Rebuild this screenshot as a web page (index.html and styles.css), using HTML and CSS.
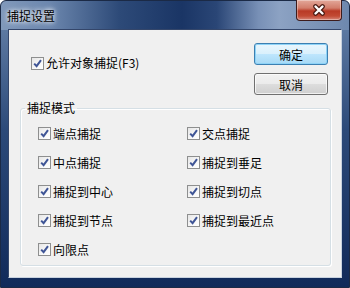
FILE: index.html
```html
<html>
<head>
  <link rel="stylesheet" href="styles.css">
</head>
<body>
  <div class="window">
    <div class="titlebar">
      <span class="title">捕捉设置</span>
      <button class="close">
        <svg width="14" height="12" viewBox="0 0 14 12">
          <path d="M3.5 2.5 L10.5 9.5 M10.5 2.5 L3.5 9.5" stroke="#4a1a12" stroke-width="4.6" stroke-linecap="round"/>
          <path d="M3.5 2.5 L10.5 9.5 M10.5 2.5 L3.5 9.5" stroke="#ffffff" stroke-width="2.4" stroke-linecap="round"/>
        </svg>
      </button>
    </div>

    <div class="client">
      <div class="top">
        <label class="check main"><span class="box"><svg width="11" height="11" viewBox="0 0 11 11"><path d="M2.2 5.6 L4.6 8.2 L9 2.2" fill="none" stroke="#3f5596" stroke-width="2"/></svg></span>允许对象捕捉(F3)</label>
        <div class="buttons">
          <button class="btn default">确定</button>
          <button class="btn">取消</button>
        </div>
      </div>

      <fieldset class="group">
        <legend>捕捉模式</legend>
        <div class="grid">
          <label class="check"><span class="box"><svg width="11" height="11" viewBox="0 0 11 11"><path d="M2.2 5.6 L4.6 8.2 L9 2.2" fill="none" stroke="#3f5596" stroke-width="2"/></svg></span>端点捕捉</label>
          <label class="check"><span class="box"><svg width="11" height="11" viewBox="0 0 11 11"><path d="M2.2 5.6 L4.6 8.2 L9 2.2" fill="none" stroke="#3f5596" stroke-width="2"/></svg></span>交点捕捉</label>
          <label class="check"><span class="box"><svg width="11" height="11" viewBox="0 0 11 11"><path d="M2.2 5.6 L4.6 8.2 L9 2.2" fill="none" stroke="#3f5596" stroke-width="2"/></svg></span>中点捕捉</label>
          <label class="check"><span class="box"><svg width="11" height="11" viewBox="0 0 11 11"><path d="M2.2 5.6 L4.6 8.2 L9 2.2" fill="none" stroke="#3f5596" stroke-width="2"/></svg></span>捕捉到垂足</label>
          <label class="check"><span class="box"><svg width="11" height="11" viewBox="0 0 11 11"><path d="M2.2 5.6 L4.6 8.2 L9 2.2" fill="none" stroke="#3f5596" stroke-width="2"/></svg></span>捕捉到中心</label>
          <label class="check"><span class="box"><svg width="11" height="11" viewBox="0 0 11 11"><path d="M2.2 5.6 L4.6 8.2 L9 2.2" fill="none" stroke="#3f5596" stroke-width="2"/></svg></span>捕捉到切点</label>
          <label class="check"><span class="box"><svg width="11" height="11" viewBox="0 0 11 11"><path d="M2.2 5.6 L4.6 8.2 L9 2.2" fill="none" stroke="#3f5596" stroke-width="2"/></svg></span>捕捉到节点</label>
          <label class="check"><span class="box"><svg width="11" height="11" viewBox="0 0 11 11"><path d="M2.2 5.6 L4.6 8.2 L9 2.2" fill="none" stroke="#3f5596" stroke-width="2"/></svg></span>捕捉到最近点</label>
          <label class="check"><span class="box"><svg width="11" height="11" viewBox="0 0 11 11"><path d="M2.2 5.6 L4.6 8.2 L9 2.2" fill="none" stroke="#3f5596" stroke-width="2"/></svg></span>向限点</label>
        </div>
      </fieldset>
    </div>
  </div>
</body>
</html>
```

FILE: styles.css
```css
body {
  margin: 0;
  font-family: "Noto Sans CJK SC", "Noto Sans", sans-serif;
  font-size: 12px;
  color: #000;
}

.window {
  box-sizing: border-box;
  width: 350px;
  height: 288px;
  display: flex;
  flex-direction: column;
  padding: 0 7px 9px 7px;
  border: 1px solid #1b2a46;
  border-radius: 6px 6px 0 0;
  background:
    linear-gradient(to right, #8199bb 0%, #6c87ae 14%, #2d4a78 34%, #1a3565 52%, #2a4676 62%, #7890b6 74%, #8ca2c3 80%, #6e88ae 100%) top / 100% 29px no-repeat,
    linear-gradient(to bottom, #6a86ad 0%, #2c4a79 45%, #112a5a 100%);
}

.titlebar {
  height: 28px;
  display: flex;
  align-items: flex-start;
}

.title {
  align-self: center;
  margin-left: -1px;
  margin-top: 1px;
  text-shadow: 0 0 4px #fff, 0 0 6px rgba(255, 255, 255, 0.8);
}

.close {
  margin-left: auto;
  margin-top: -1px;
  width: 46px;
  height: 21px;
  padding: 0;
  display: flex;
  align-items: center;
  justify-content: center;
  border: 1px solid #3d1c1c;
  border-top: none;
  border-radius: 0 0 4px 4px;
  background: linear-gradient(to bottom, #e3a89a 0%, #d27d6b 40%, #b93a26 55%, #c24a34 80%, #d8887a 100%);
  box-shadow: inset 0 0 0 1px rgba(255, 255, 255, 0.35);
}

.client {
  flex: 1;
  display: flex;
  flex-direction: column;
  padding: 13px 10px 0 11px;
  background: #f0f0f0;
  border: 1px solid;
  border-color: #34466a #c8d2df #c8d2df #34466a;
}

.top {
  display: flex;
  justify-content: space-between;
}

.check {
  display: flex;
  align-items: center;
  gap: 2px;
  line-height: 16px;
  white-space: nowrap;
}

.check.main {
  align-self: flex-start;
  margin: 12px 0 0 11px;
}

.box {
  box-sizing: border-box;
  width: 13px;
  height: 13px;
  display: flex;
  border: 1px solid #8e8f8f;
  background: linear-gradient(135deg, #e6e6e6 0%, #f8f8f8 60%, #ffffff 100%);
}

.buttons {
  display: flex;
  flex-direction: column;
  gap: 8px;
  margin-right: 3px;
}

.btn {
  width: 74px;
  height: 22px;
  padding: 0;
  font-family: inherit;
  font-size: 12px;
  color: #000;
  border: 1px solid #707070;
  border-radius: 3px;
  background: linear-gradient(to bottom, #f2f2f2 0%, #ebebeb 50%, #dddddd 51%, #cfcfcf 100%);
  box-shadow: inset 0 0 0 1px rgba(255, 255, 255, 0.7);
}

.btn.default {
  border-color: #3c7fb1;
  background: linear-gradient(to bottom, #eaf6fd 0%, #d9f0fc 50%, #bee6fd 51%, #a7d9f5 100%);
  box-shadow: inset 0 0 0 1px #8ed3f7;
}

.group {
  margin: 6px 0 0 0;
  padding: 4px 0 0 0;
  height: 165px;
  box-sizing: border-box;
  border: 1px solid #d5dfe5;
  border-radius: 3px;
  box-shadow: 1px 1px 0 #ffffff, inset 1px 1px 0 #ffffff;
}

.group legend {
  margin-left: 4px;
  padding: 0 2px;
  line-height: 14px;
}

.grid {
  display: grid;
  grid-template-columns: 149px 1fr;
  grid-auto-rows: 29px;
  align-items: center;
  padding-left: 17px;
}
```
